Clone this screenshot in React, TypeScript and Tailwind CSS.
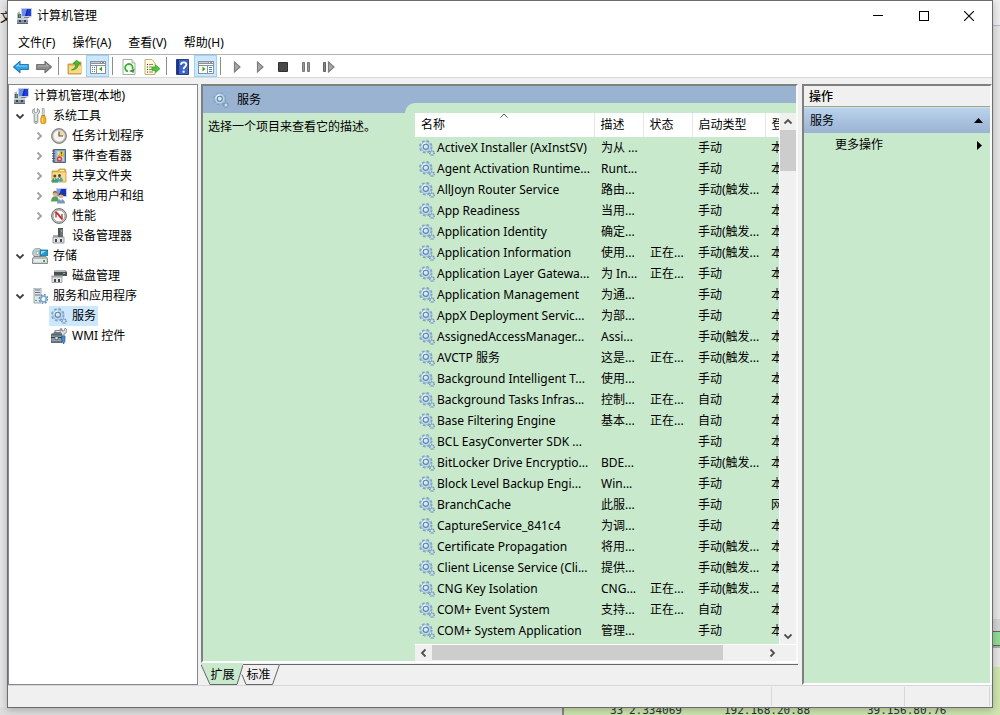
import React from "react";

type IconProps = { className?: string };

const svg = (children: React.ReactNode, crisp = false) =>
  function Icon({ className = "size-4 shrink-0" }: IconProps) {
    return (
      <svg viewBox="0 0 16 16" className={className} aria-hidden="true" shapeRendering={crisp ? "crispEdges" : "auto"}>
        {children}
      </svg>
    );
  };

const ComputerIcon = svg(
  <>
    <path d="M5 0h11v8l-2 2H5z" fill="#c9cdda" />
    <path d="M6 1h9v7H6z" fill="#0f2ba8" />
    <path d="M6 1h5l-2 7H6z" fill="#6e8cf0" />
    <path d="M12 1h3v7h-4z" fill="#1a42d8" />
    <path d="M8 9h5v1H8z" fill="#7b8494" />
    <path d="M1 5l3-2v8H1z" fill="#b9bfc8" />
    <path d="M2 6h3v4H2z" fill="#4e5b6d" />
    <path d="M3 5l2 3-2 2z" fill="#4caa45" />
    <path d="M1 10h11v5H1z" fill="#8794a2" />
    <path d="M1 10h11v2H1z" fill="#c6cfd7" />
    <path d="M3 12h2v2H3zM8 12h2v2H8z" fill="#33404f" />
    <path d="M1 15h11v1H1z" fill="#5b6774" />
  </>,
);

const ToolsIcon = svg(
  <>
    <path d="M2.500 .5L2 3.500l1.800 1.300L5.500 3.500 5.200 .6C7 1.200 7.700 2.600 7.500 4 7.300 5.200 6.300 6 5.800 6.300V14c0 2-3.600 2-3.600 0V6.300C1.200 5.700.4 4.800.4 3.600.4 2.200 1.200 1 2.500 .5z" fill="#dfe2e4" stroke="#7b8084" strokeWidth=".8" />
    <circle cx="4" cy="13.700" r=".8" fill="#6b7074" />
    <path d="M10.300 .6h1.900v7h-1.900z" fill="#eceeee" stroke="#85898c" strokeWidth=".7" />
    <path d="M9.600 7.500h3.400v1.500l.8 1v4.200c0 2-5 2-5 0V10l.8-1z" fill="#f5b01c" stroke="#bd7d05" strokeWidth=".7" />
    <path d="M10.500 10v4.500" stroke="#ffe28a" />
  </>,
);

const ClockIcon = svg(
  <>
    <circle cx="8" cy="8" r="7.500" fill="#a7a7a7" stroke="#777" strokeWidth=".8" />
    <circle cx="8" cy="8" r="5.800" fill="#f7f3e6" stroke="#d5d5d5" strokeWidth=".6" />
    <path d="M8 8V2.400A5.600 5.600 0 0 1 13.600 8z" fill="#f5d7a0" />
    <path d="M8 3.500V8h4" fill="none" stroke="#405b7c" strokeWidth="1.200" />
  </>,
);

const EventIcon = svg(
  <>
    <path d="M2.500 1.500h12v13h-12z" fill="#87a9cb" stroke="#4c6680" />
    <path d="M5.500 3h7.500v10H5.500z" fill="#b9cde0" />
    <path d="M7 5h5M7 7h5M7 9h5" stroke="#e9f0f7" />
    <path d="M1 3h3M1 5.500h3M1 8h3M1 10.500h3M1 13h3" stroke="#49586a" />
    <path d="M10.500 2.500l3 5.500h-6z" fill="#ffd31b" stroke="#b88e06" strokeWidth=".6" />
    <path d="M10.500 4v2.200M10.500 6.800v.6" stroke="#4b3d00" strokeWidth=".9" />
    <circle cx="8.500" cy="11" r="2.700" fill="#df3c35" />
    <path d="M7.500 10l2 2M9.500 10l-2 2" stroke="#fff" strokeWidth=".9" />
  </>,
);

const SharedIcon = svg(
  <>
    <path d="M1 3h6l1-2h6l1 2v11H1z" fill="#e6b84c" stroke="#b08828" strokeWidth=".7" />
    <path d="M1.500 4.500h13v9h-13z" fill="#f8dc87" />
    <path d="M9 2.500h4" stroke="#fff6d0" />
    <circle cx="3.800" cy="8" r="1.500" fill="#5d4632" />
    <circle cx="8.500" cy="7.500" r="1.500" fill="#5d4632" />
    <path d="M.5 14.500c0-6 6.500-6 6.500 0z" fill="#3f9c74" />
    <path d="M5.500 13.500c0-6 6.500-6 6.500 0z" fill="#4f9fb0" />
    <path d="M3 10.500l.8 1.500.8-1.500zM7.800 10l.8 1.500.8-1.500z" fill="#fff" />
  </>,
);

const UsersIcon = svg(
  <>
    <path d="M5 0h11v9H5z" fill="#c7ccda" />
    <path d="M6 1h9v7H6z" fill="#1334c8" />
    <path d="M6 1h4L8 8H6z" fill="#7d98f1" />
    <circle cx="4" cy="5.800" r="2.300" fill="#d9b27c" />
    <path d="M1.600 5.500c.4-4 4.800-3.500 4.900-.3L4 4.500z" fill="#8b6a32" />
    <path d="M0 13.500c0-7 8-7 8 0z" fill="#5b9d54" />
    <circle cx="10" cy="8" r="2.400" fill="#e0b797" />
    <path d="M7.500 7.500c0-4 5-3.500 5 0L10 6.500z" fill="#473832" />
    <path d="M6 15.500c0-6 8-6 8 0z" fill="#7b97bb" />
    <path d="M9 11l1 2 1-2z" fill="#fff" />
  </>,
);

const PerfIcon = svg(
  <>
    <circle cx="8" cy="8" r="7.400" fill="#c9c9c9" stroke="#686868" />
    <circle cx="8" cy="8" r="5.800" fill="#fff" stroke="#999" strokeWidth=".7" />
    <path d="M5 9.500V5M11 6v4.500" stroke="#5c2222" strokeWidth="1.100" />
    <path d="M4.500 3.800l3 2.700 1 1.700 3 3.300" fill="none" stroke="#dd1b1b" strokeWidth="1.800" />
  </>,
);

const DeviceIcon = svg(
  <>
    <path d="M7 0h5v9H7z" fill="#4f5356" />
    <path d="M9 1h3v7H9z" fill="#6d7275" />
    <path d="M10 2h1v2h-1z" fill="#63d34d" />
    <path d="M2 7h5v2h6v6H2z" fill="#aeb1b4" />
    <path d="M2 9h11v6H2z" fill="#e0e2e4" stroke="#84888c" strokeWidth=".8" />
    <path d="M4 11h2v3H4zM9 11h2v3H9z" fill="#46494c" />
  </>,
);

const StorageIcon = svg(
  <>
    <circle cx="5.500" cy="5" r="4.900" fill="#c4cccf" stroke="#79868c" strokeWidth=".7" />
    <path d="M5.500 5L1.500 2.500A5 5 0 0 1 5 .2z" fill="#9fd8c4" />
    <circle cx="5.500" cy="5" r="1.500" fill="#fff" stroke="#79868c" strokeWidth=".6" />
    <path d="M8 2h8v5.500H8z" fill="#209ac9" stroke="#17658c" strokeWidth=".7" />
    <path d="M9 3h5L9 6.500z" fill="#8bdcf5" />
    <path d="M2 8.500h12l1.500 2V15.500h-15v-5z" fill="#b7bbbe" stroke="#686e73" strokeWidth=".7" />
    <path d="M1.500 11h13v3.500h-13z" fill="#e7eaec" />
    <path d="M11 12h2v2h-2z" fill="#35b92c" />
  </>,
);

const DiskIcon = svg(
  <>
    <path d="M4 2h10l2 2v4H3V4z" fill="#4b5053" />
    <path d="M4 2h10l1 2H3z" fill="#b5babd" />
    <path d="M12 5h2v1h-2z" fill="#62d64d" />
    <path d="M0 7.500h12V9H0z" fill="#b5b8bb" />
    <path d="M1 9h10v5.500H1z" fill="#e3e5e7" stroke="#85898c" strokeWidth=".7" />
    <path d="M3 11h2v3H3zM7 11h2v3H7z" fill="#45494c" />
  </>,
);

const ServicesAppsIcon = svg(
  <>
    <path d="M2 0h7v15H2z" fill="#dee4e7" stroke="#8d999f" strokeWidth=".8" />
    <path d="M3 2h5M3 4.500h5M3 7h5" stroke="#65727c" />
    <path d="M3 12h2v1H3z" fill="#54b34b" />
    <circle cx="11.500" cy="11" r="4.200" fill="none" stroke="#5887b5" strokeWidth="1.500" strokeDasharray="1.650 1.650" />
    <circle cx="11.500" cy="11" r="2.800" fill="#fff" stroke="#7ba9d2" strokeWidth="1.700" />
  </>,
);

const GearsIcon = svg(
  <>
    <circle cx="6.800" cy="6.800" r="5.800" fill="none" stroke="#86a2be" strokeWidth="1.900" strokeDasharray="2.640 1.916" />
    <circle cx="6.800" cy="6.800" r="5" fill="#b4d9f4" stroke="#8eb2d3" strokeWidth=".7" />
    <path d="M3 6.800A3.800 3.800 0 0 1 6.800 3" fill="none" stroke="#eaf7ff" strokeWidth="1.300" />
    <circle cx="6.800" cy="6.800" r="2.600" fill="#dcebe4" stroke="#6283a6" strokeWidth="1.100" />
    <circle cx="13" cy="13" r="2.300" fill="none" stroke="#7390ae" strokeWidth="1.300" strokeDasharray="1.005 .802" />
    <circle cx="13" cy="13" r="1.500" fill="#e3f1f8" stroke="#8fb0cd" />
  </>,
);

const WmiIcon = svg(
  <>
    <path d="M4 6V3l7-1v4" fill="none" stroke="#777e86" strokeWidth="1.200" />
    <path d="M0 6l4-2h9l-2 3v8H0z" fill="#6c7882" />
    <path d="M0 7h11v7H0z" fill="#8c9ba6" stroke="#46525d" strokeWidth=".8" />
    <path d="M0 9.500h11" stroke="#313b44" />
    <path d="M4 8.500h3v3H4z" fill="#d7dde2" stroke="#46525d" strokeWidth=".6" />
    <path d="M10 0l1 3h2l1-3 2 2-1 3-2 1v3h-2V6L9 4z" fill="#dce0e3" stroke="#70777e" strokeWidth=".7" />
    <path d="M11 8h3v5l-1.500 3-1.500-3z" fill="#4d8fd0" stroke="#235d96" strokeWidth=".7" />
  </>,
);

const BackIcon = svg(
  <>
    <path d="M.6 8l6.400-5.700v3.200h8.300v5H7v3.200z" fill="#2fa4e6" stroke="#2a78b4" strokeWidth="1.100" strokeLinejoin="round" />
    <path d="M2.500 7.500L6 4.500v2h8.300v1z" fill="#7fd0f8" />
  </>,
);
const ForwardIcon = svg(
  <>
    <path d="M15.400 8L9 2.300v3.200H.7v5H9v3.200z" fill="#8c8c8c" stroke="#707070" strokeWidth="1.100" strokeLinejoin="round" />
    <path d="M13.500 7.500L10 4.500v2H1.700v1z" fill="#b0b0b0" />
  </>,
);
const UpFolderIcon = svg(
  <>
    <path d="M1 5h5l1-2h7v12H1z" fill="#e9bc59" stroke="#b58a32" strokeWidth=".8" />
    <path d="M2 7h12v7H2z" fill="#f7d988" />
    <path d="M4.500 11c4-1.500 4.500-4 4-6H6.500L9.500 1l4 4h-2.300c.3 3-1.700 5.800-6.700 6z" fill="#44c32c" stroke="#258c19" strokeWidth=".7" />
  </>,
);

const paneBase = (
  <>
    <path d="M0 2h16v13H0z" fill="#8b929b" />
    <path d="M1 3h9v1H1z" fill="#c4c9cf" />
    <path d="M1 5h14v1H1zM1 7h14v7H1z" fill="#fff" />
    <path d="M11 3h1v1h-1zM14 3h1v1h-1z" fill="#fff" />
  </>
);
const PaneLeftIcon = svg(
  <>
    {paneBase}
    <path d="M6 6h1v8H6z" fill="#8b929b" />
    <path d="M2 8h1v1H2zM4 8h1v1H4zM2 10h1v1H2zM4 10h1v1H4zM2 12h1v1H2zM4 12h1v1H4z" fill="#3a84c4" />
    <path d="M12 7.500v5l-3-2.500z" fill="#35a12b" shapeRendering="auto" />
  </>,
  true,
);
const PaneRightIcon = svg(
  <>
    {paneBase}
    <path d="M9 6h1v8H9z" fill="#8b929b" />
    <path d="M11 8h3v1h-3zM11 10h3v1h-3zM11 12h3v1h-3z" fill="#3a84c4" />
    <path d="M4.500 7.500v5l3-2.500z" fill="#35a12b" shapeRendering="auto" />
  </>,
  true,
);
const RefreshIcon = svg(
  <>
    <path d="M2 .5h9L14 4v11.500H2z" fill="#fff" stroke="#a9a9a9" />
    <path d="M11 .5V4h3" fill="#eee" stroke="#a9a9a9" />
    <path d="M7 12.500A3.800 3.800 0 1 1 11.500 10" fill="none" stroke="#35b52b" strokeWidth="1.800" />
    <path d="M13.500 9.500l-1 4.500-4.500-2z" fill="#2aa122" />
  </>,
);
const ExportIcon = svg(
  <>
    <path d="M1 .5h7L11 4v11.500H1z" fill="#fff9db" stroke="#b9a96e" strokeWidth=".9" />
    <path d="M3 5.500h1M3 8h1M3 10.500h1M3 13h1" stroke="#333" />
    <path d="M5 5.500h4M5 8h3M5 10.500h3M5 13h4" stroke="#8b8870" />
    <path d="M8 8h3.500V5.800L16 9.700l-4.500 4v-2.300H8z" fill="#4ec735" stroke="#2a951c" strokeWidth=".6" />
  </>,
);
const HelpIcon = svg(
  <>
    <path d="M1.500 .5h12v15h-12z" fill="#3f63c4" stroke="#243f86" />
    <path d="M3 1v14" stroke="#1b357f" strokeWidth="2" />
    <path d="M6 5.800C6 2.500 11.300 2.600 11.300 5.700c0 2-2.700 2.200-2.700 4.600" fill="none" stroke="#fff" strokeWidth="1.800" />
    <path d="M7.600 11.700h2v2h-2z" fill="#fff" />
  </>,
);
const PlayIcon = svg(<path d="M5.500 3v10l5.500-5z" fill="#a9a9a9" stroke="#7c7c7c" strokeWidth="1.200" />);
const StopIcon = svg(<path d="M3.500 3.500h9v9h-9z" fill="#484848" stroke="#303030" />);
const PauseIcon = svg(<path d="M4.500 3.500h2v9h-2zM9.500 3.500h2v9h-2z" fill="#999" stroke="#777" />);
const StepIcon = svg(
  <>
    <path d="M2.500 3.500h2v9h-2z" fill="#888" stroke="#606060" />
    <path d="M7.500 3v10l5.500-5z" fill="#a9a9a9" stroke="#7c7c7c" strokeWidth="1.200" />
  </>,
);

function Chevron({ dir, className = "" }: { dir: "up" | "down" | "left" | "right"; className?: string }) {
  const d = {
    up: "M1.500 6.500L5 3l3.500 3.500",
    down: "M1.500 3.500L5 7l3.500-3.500",
    left: "M6.500 1.500L3 5l3.500 3.500",
    right: "M3.500 1.500L7 5 3.500 8.500",
  }[dir];
  return (
    <svg viewBox="0 0 10 10" className={`size-[10px] shrink-0 ${className}`} aria-hidden="true">
      <path d={d} fill="none" stroke="currentColor" strokeWidth="1.800" />
    </svg>
  );
}

type Tool = { label: string; icon: React.FC<IconProps>; on?: boolean };
const toolGroups: Tool[][] = [
  [
    { label: "后退", icon: BackIcon },
    { label: "前进", icon: ForwardIcon },
  ],
  [
    { label: "向上", icon: UpFolderIcon },
    { label: "显示/隐藏控制台树", icon: PaneLeftIcon, on: true },
  ],
  [
    { label: "刷新", icon: RefreshIcon },
    { label: "导出列表", icon: ExportIcon },
  ],
  [
    { label: "帮助", icon: HelpIcon },
    { label: "显示/隐藏操作窗格", icon: PaneRightIcon, on: true },
  ],
  [
    { label: "启动服务", icon: PlayIcon },
    { label: "继续服务", icon: PlayIcon },
    { label: "停止服务", icon: StopIcon },
    { label: "暂停服务", icon: PauseIcon },
    { label: "重新启动服务", icon: StepIcon },
  ],
];

type Node = { text: string; icon: React.FC<IconProps>; level: 0 | 1 | 2; state?: "open" | "closed"; selected?: boolean };
const tree: Node[] = [
  { text: "计算机管理(本地)", icon: ComputerIcon, level: 0 },
  { text: "系统工具", icon: ToolsIcon, level: 1, state: "open" },
  { text: "任务计划程序", icon: ClockIcon, level: 2, state: "closed" },
  { text: "事件查看器", icon: EventIcon, level: 2, state: "closed" },
  { text: "共享文件夹", icon: SharedIcon, level: 2, state: "closed" },
  { text: "本地用户和组", icon: UsersIcon, level: 2, state: "closed" },
  { text: "性能", icon: PerfIcon, level: 2, state: "closed" },
  { text: "设备管理器", icon: DeviceIcon, level: 2 },
  { text: "存储", icon: StorageIcon, level: 1, state: "open" },
  { text: "磁盘管理", icon: DiskIcon, level: 2 },
  { text: "服务和应用程序", icon: ServicesAppsIcon, level: 1, state: "open" },
  { text: "服务", icon: GearsIcon, level: 2, selected: true },
  { text: "WMI 控件", icon: WmiIcon, level: 2 },
];
const indent = { 0: "pl-1", 1: "pl-1", 2: "pl-[23px]" };

const services: [string, string, string, string, string][] = [
  ["ActiveX Installer (AxInstSV)", "为从 ...", "", "手动", "本"],
  ["Agent Activation Runtime...", "Runt...", "", "手动", "本"],
  ["AllJoyn Router Service", "路由...", "", "手动(触发...", "本"],
  ["App Readiness", "当用...", "", "手动", "本"],
  ["Application Identity", "确定...", "", "手动(触发...", "本"],
  ["Application Information", "使用...", "正在...", "手动(触发...", "本"],
  ["Application Layer Gatewa...", "为 In...", "正在...", "手动", "本"],
  ["Application Management", "为通...", "", "手动", "本"],
  ["AppX Deployment Servic...", "为部...", "", "手动", "本"],
  ["AssignedAccessManager...", "Assi...", "", "手动(触发...", "本"],
  ["AVCTP 服务", "这是...", "正在...", "手动(触发...", "本"],
  ["Background Intelligent T...", "使用...", "", "手动", "本"],
  ["Background Tasks Infras...", "控制...", "正在...", "自动", "本"],
  ["Base Filtering Engine", "基本...", "正在...", "自动", "本"],
  ["BCL EasyConverter SDK ...", "", "", "手动", "本"],
  ["BitLocker Drive Encryptio...", "BDE...", "", "手动(触发...", "本"],
  ["Block Level Backup Engi...", "Win...", "", "手动", "本"],
  ["BranchCache", "此服...", "", "手动", "网"],
  ["CaptureService_841c4", "为调...", "", "手动", "本"],
  ["Certificate Propagation", "将用...", "", "手动(触发...", "本"],
  ["Client License Service (Cli...", "提供...", "", "手动(触发...", "本"],
  ["CNG Key Isolation", "CNG...", "正在...", "手动(触发...", "本"],
  ["COM+ Event System", "支持...", "正在...", "自动", "本"],
  ["COM+ System Application", "管理...", "", "手动", "本"],
  ["", "", "", "", ""],
];

function Backdrop() {
  return (
    <div aria-hidden="true" className="absolute inset-0 flex flex-col">
      <div className="flex min-h-0 flex-1 justify-between">
        <div className="overflow-hidden pt-[9px] font-[Noto_Sans_CJK_SC,sans-serif] text-xs leading-4 whitespace-nowrap">文件</div>
        <div className="flex w-[10px] flex-col">
          <div className="h-[26px] border-b border-[#b7bbce] bg-[#eeeeee]" />
          <div className="flex-1" />
          <div className="h-[12px] bg-[#d4d4d4]" />
          <div className="h-[15px] border-y border-[#666] bg-[#93dc94]" />
          <div className="h-[21px] border-t-2 border-[#aaa]" />
          <div className="h-[40px] bg-[#cfe6b0]" />
        </div>
      </div>
      <div className="flex h-[8px] shrink-0 overflow-hidden bg-[#dedede]">
        <div className="w-[56.2%]" />
        <div className="flex flex-1 items-end border-l-2 border-[#888] bg-[#cfe6b0]">
          <div className="flex h-3 pl-[46px] font-[DejaVu_Sans_Mono,monospace] text-[11px] leading-4 text-[#24343c]">
            <span className="w-[19px]">33</span>
            <span className="w-[95px]">2.334069</span>
            <span className="w-[143px]">192.168.20.88</span>
            <span>39.156.80.76</span>
          </div>
        </div>
      </div>
    </div>
  );
}

function TitleBar() {
  return (
    <header className="flex h-[30px] shrink-0 items-center bg-white pl-2">
      <ComputerIcon />
      <h1 className="ml-[5px] flex-1 text-xs">计算机管理</h1>
      <button aria-label="最小化" className="flex h-full w-[46px] items-center justify-center">
        <svg viewBox="0 0 10 10" className="size-[10px]" shapeRendering="crispEdges"><path d="M0 4h10v1H0z" /></svg>
      </button>
      <button aria-label="最大化" className="flex h-full w-[45px] items-center justify-center">
        <svg viewBox="0 0 10 10" className="size-[10px]" shapeRendering="crispEdges"><path d="M.5 .5h9v9h-9z" fill="none" stroke="#000" /></svg>
      </button>
      <button aria-label="关闭" className="flex h-full w-[46px] items-center justify-center">
        <svg viewBox="0 0 10 10" className="size-[10px]"><path d="M0 0l10 10M10 0L0 10" stroke="#000" strokeWidth="1.100" /></svg>
      </button>
    </header>
  );
}

function Toolbar() {
  return (
    <div role="toolbar" className="flex h-[24px] shrink-0 border-y border-t-[#b4b4b4] border-b-[#d9d9d9] bg-white pl-px">
      {toolGroups.map((group, i) => (
        <div key={i} className="flex">
          {i > 0 && <div className="my-[2px] mr-1 ml-[3px] w-px bg-[#8d8d8d]" />}
          {group.map(({ label, icon: Icon, on }) => (
            <button
              key={label}
              aria-label={label}
              className={`flex w-[23px] items-center justify-center border pt-px ${on ? "border-[#99d1ff] bg-[#cce8ff]" : "border-transparent"}`}
            >
              <Icon />
            </button>
          ))}
        </div>
      ))}
    </div>
  );
}

function Tree() {
  return (
    <nav aria-label="控制台树" className="w-[190px] shrink-0 border border-[#828790] bg-white pt-px">
      <ul>
        {tree.map(({ text, icon: Icon, level, state, selected }) => (
          <li key={text} className={`flex h-5 items-center ${indent[level]}`}>
            {level > 0 && (
              <span className="flex w-[14px] justify-center">
                {state === "open" && <Chevron dir="down" className="text-[#404040]" />}
                {state === "closed" && <Chevron dir="right" className="text-[#a0a0a0]" />}
              </span>
            )}
            <button className={`flex h-5 items-center gap-[5px] whitespace-nowrap ${level > 0 ? "ml-[3px] px-[2px]" : ""} ${selected ? "bg-[#cce8ff]" : ""}`}>
              <Icon />
              {text}
            </button>
          </li>
        ))}
      </ul>
    </nav>
  );
}

const scrollButton = "flex shrink-0 items-center justify-center text-[#505050]";

function ServiceList() {
  return (
    <div className="flex min-h-0 flex-1 flex-col">
      <div className="flex min-h-0 flex-1 border-b border-white">
        <div className="min-w-0 flex-1 overflow-hidden border-r border-white">
          <table className="w-full table-fixed border-collapse text-left whitespace-nowrap">
            <colgroup>
              <col />
              <col className="w-[49px]" />
              <col className="w-[49px]" />
              <col className="w-[73px]" />
              <col className="w-[14px]" />
            </colgroup>
            <thead className="bg-white">
              <tr className="h-6">
                {["名称", "描述", "状态", "启动类型", "登"].map((name, i) => (
                  <th
                    key={name}
                    className={`relative overflow-hidden p-0 pl-[6px] font-normal ${i < 4 ? "border-r border-[#e5e5e5]" : ""}`}
                  >
                    {name}
                    {i === 0 && (
                      <svg viewBox="0 0 9 5" className="absolute top-0 left-1/2 h-[5px] w-[9px] -translate-x-1/2" aria-hidden="true">
                        <path d="M1 4.500L4.500 1 8 4.500" fill="none" stroke="#555" />
                      </svg>
                    )}
                  </th>
                ))}
              </tr>
            </thead>
            <tbody>
              {services.map(([name, desc, status, type, logon], i) => (
                <tr key={i} className="h-[21px]">
                  <td className="overflow-hidden p-0 pl-1">
                    <span className="flex items-center gap-[2px]">
                      <GearsIcon />
                      {name}
                    </span>
                  </td>
                  <td className="overflow-hidden p-0 pl-[7px]">{desc}</td>
                  <td className="overflow-hidden p-0 pl-[7px]">{status}</td>
                  <td className="overflow-hidden p-0 pl-[6px]">{type}</td>
                  <td className="overflow-hidden p-0 pl-[6px]">{logon}</td>
                </tr>
              ))}
            </tbody>
          </table>
        </div>
        <div className="flex w-4 shrink-0 flex-col bg-[#f0f0f0]">
          <button aria-label="向上滚动" className={`${scrollButton} h-[17px]`}><Chevron dir="up" /></button>
          <div className="h-[41px] bg-[#cdcdcd]" />
          <div className="flex-1" />
          <button aria-label="向下滚动" className={`${scrollButton} h-[17px]`}><Chevron dir="down" /></button>
        </div>
      </div>
      <div className="flex h-4 shrink-0 bg-[#f0f0f0] pr-4">
        <button aria-label="向左滚动" className={`${scrollButton} w-[17px]`}><Chevron dir="left" /></button>
        <div className="flex flex-1"><div className="mb-px w-[88%] bg-[#cdcdcd]" /></div>
        <button aria-label="向右滚动" className={`${scrollButton} w-[17px]`}><Chevron dir="right" /></button>
      </div>
    </div>
  );
}

function ViewTabs() {
  return (
    <div role="tablist" className="flex h-[22px] shrink-0">
      <button role="tab" aria-selected="true" className="relative w-[42px] pt-px pl-px">
        <svg viewBox="0 0 42 22" className="absolute inset-0 h-[22px] w-[42px]" aria-hidden="true">
          <path d="M0 0h42v2l-6 19.500H9z" fill="#c9e9cd" />
          <path d="M0 1.500l9 20h27l6-19.500" fill="none" stroke="#666" />
        </svg>
        <span className="relative">扩展</span>
      </button>
      <button role="tab" aria-selected="false" className="relative w-[37px] pt-px pr-[6px]">
        <svg viewBox="0 0 37 22" className="absolute inset-0 h-[22px] w-[37px] overflow-visible" aria-hidden="true">
          <path d="M0 1.500h36.500l-7 20H3l-4-10" fill="none" stroke="#666" />
        </svg>
        <span className="relative">标准</span>
      </button>
      <div className="mt-px h-px flex-1 bg-[#666]" />
    </div>
  );
}

function ServicesPane() {
  return (
    <main className="ml-[3px] flex min-w-0 flex-1 flex-col">
      <div className="flex min-h-0 flex-1 flex-col border-2 border-t-[#808080] border-r-[#fafafa] border-b-white border-l-[#808080] bg-[#c9e9cd]">
        <div className="flex h-[27px] shrink-0 bg-[#99b3d1]">
          <h2 className="flex w-[202px] items-center gap-2 pl-[10px]">
            <GearsIcon />
            服务
          </h2>
          <div className="mt-[17px] flex-1 rounded-tl-[10px] bg-[#c9e9cd]" />
        </div>
        <div className="flex min-h-0 flex-1">
          <p className="w-[212px] shrink-0 pt-[6px] pl-[5px]">选择一个项目来查看它的描述。</p>
          <ServiceList />
        </div>
      </div>
      <ViewTabs />
    </main>
  );
}

function ActionsPane() {
  return (
    <aside className="ml-1 flex w-[190px] shrink-0 flex-col border-2 border-t-[#808080] border-r-[#fafafa] border-b-white border-l-[#808080] bg-[#c9e9cd]">
      <h2 className="flex h-[21px] items-center border-b border-[#a0a0a0] bg-[#f0f0f0] pt-px pl-[5px] font-medium">操作</h2>
      <button className="mt-px flex h-[25px] items-center justify-between bg-linear-to-b from-[#bad2ed] to-[#99b3d1] pr-[7px] pl-[6px]">
        服务
        <svg viewBox="0 0 9 5" className="h-[5px] w-[9px]" aria-hidden="true"><path d="M0 5L4.500 0 9 5z" /></svg>
      </button>
      <button className="flex h-6 items-center justify-between pr-2 pl-[31px]">
        更多操作
        <svg viewBox="0 0 5 9" className="h-[9px] w-[5px]" aria-hidden="true"><path d="M0 0l5 4.500L0 9z" /></svg>
      </button>
    </aside>
  );
}

export default function App() {
  return (
    <div className="relative h-screen overflow-hidden bg-[#e6e6e6] px-[7px] pb-[7px]">
      <Backdrop />
      <div className="relative flex h-full flex-col border border-[#6b6b6b] bg-[#f0f0f0] font-[Noto_Sans,Noto_Sans_CJK_SC,sans-serif] text-xs leading-4 text-black shadow-[0_2px_8px_rgba(0,0,0,0.25)]">
        <TitleBar />
        <nav aria-label="菜单" className="flex h-[23px] shrink-0 items-center gap-[17px] bg-white pl-[10px]">
          {["文件(F)", "操作(A)", "查看(V)", "帮助(H)"].map((m) => (
            <button key={m}>{m}</button>
          ))}
        </nav>
        <Toolbar />
        <div className="flex min-h-0 flex-1 pt-[6px]">
          <Tree />
          <ServicesPane />
          <ActionsPane />
        </div>
        <footer className="flex h-[22px] shrink-0 border-t border-[#d7d7d7] py-px pr-[2px]">
          <div className="flex-1" />
          <div className="w-[133px] border-l border-[#d7d7d7]" />
          <div className="w-[86px] border-x border-[#d7d7d7]" />
        </footer>
      </div>
    </div>
  );
}
